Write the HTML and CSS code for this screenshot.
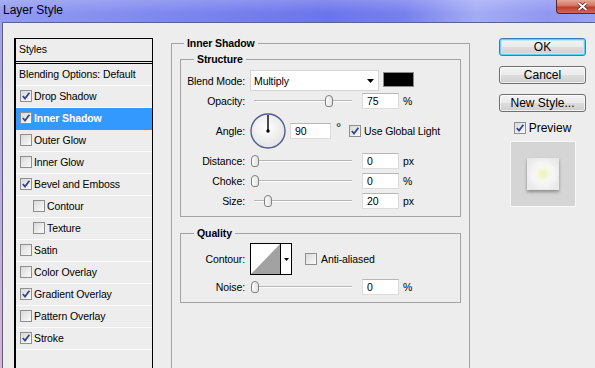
FILE: index.html
```html
<!DOCTYPE html>
<html>
<head>
<meta charset="utf-8">
<title>Layer Style</title>
<link rel="stylesheet" href="styles.css">
</head>
<body>
<div class="window">
	<div class="titlebar">
		<span class="title">Layer Style</span>
		<span class="close"><svg width="11" height="9" viewBox="0 0 11 9"><path d="M1.5 1 L9.5 8 M9.5 1 L1.5 8" stroke="#5a1a14" stroke-width="3.4"/><path d="M1.5 1 L9.5 8 M9.5 1 L1.5 8" stroke="#fff" stroke-width="2"/></svg></span>
	</div>
	<div class="client">
		<div class="styles">
			<div class="styles-head">Styles</div>
			<div class="srow plain">Blending Options: Default</div>
			<div class="srow"><span class="cb"><svg width="10" height="10" viewBox="0 0 10 10"><path d="M1.8 5 L4 7.6 L8.4 1.8" fill="none" stroke="#34468e" stroke-width="1.8"/></svg></span>Drop Shadow</div>
			<div class="srow sel"><span class="cb"><svg width="10" height="10" viewBox="0 0 10 10"><path d="M1.8 5 L4 7.6 L8.4 1.8" fill="none" stroke="#34468e" stroke-width="1.8"/></svg></span>Inner Shadow</div>
			<div class="srow"><span class="cb"></span>Outer Glow</div>
			<div class="srow"><span class="cb"></span>Inner Glow</div>
			<div class="srow"><span class="cb"><svg width="10" height="10" viewBox="0 0 10 10"><path d="M1.8 5 L4 7.6 L8.4 1.8" fill="none" stroke="#34468e" stroke-width="1.8"/></svg></span>Bevel and Emboss</div>
			<div class="srow sub"><span class="cb"></span>Contour</div>
			<div class="srow sub"><span class="cb"></span>Texture</div>
			<div class="srow"><span class="cb"></span>Satin</div>
			<div class="srow"><span class="cb"></span>Color Overlay</div>
			<div class="srow"><span class="cb"><svg width="10" height="10" viewBox="0 0 10 10"><path d="M1.8 5 L4 7.6 L8.4 1.8" fill="none" stroke="#34468e" stroke-width="1.8"/></svg></span>Gradient Overlay</div>
			<div class="srow"><span class="cb"></span>Pattern Overlay</div>
			<div class="srow"><span class="cb"><svg width="10" height="10" viewBox="0 0 10 10"><path d="M1.8 5 L4 7.6 L8.4 1.8" fill="none" stroke="#34468e" stroke-width="1.8"/></svg></span>Stroke</div>
		</div>

		<fieldset class="group outer">
			<legend>Inner Shadow</legend>
			<div class="outer-body">
				<fieldset class="group">
					<legend>Structure</legend>
					<div class="section-body structure">
						<div class="row row-blend">
							<span class="lbl">Blend Mode:</span>
							<div class="select">Multiply<svg width="7" height="4" viewBox="0 0 7 4"><path d="M0 0 H7 L3.5 4 Z" fill="#000"/></svg></div>
							<span class="color"></span>
						</div>
						<div class="row">
							<span class="lbl">Opacity:</span>
							<div class="slider"><div class="track"></div><span class="thumb" style="left: 75px"></span></div>
							<span class="num">75</span><span class="unit">%</span>
						</div>
						<div class="row row-angle">
							<span class="lbl">Angle:</span>
							<svg class="dial" width="36" height="36" viewBox="0 0 36 36">
								<defs>
									<radialGradient id="dialfill" cx="45%" cy="40%" r="60%">
										<stop offset="0" stop-color="#ffffff"/>
										<stop offset="1" stop-color="#e4e4e4"/>
									</radialGradient>
								</defs>
								<circle cx="18" cy="18" r="17" fill="url(#dialfill)" stroke="#4e5d8e" stroke-width="1.4"/>
								<path d="M18 18 V2" stroke="#000" stroke-width="1.4"/>
								<circle cx="18" cy="18" r="1.7" fill="#000"/>
							</svg>
							<span class="num wide">90</span>
							<span class="deg">&deg;</span>
							<span class="cb global"><svg width="10" height="10" viewBox="0 0 10 10"><path d="M1.8 5 L4 7.6 L8.4 1.8" fill="none" stroke="#34468e" stroke-width="1.8"/></svg></span>
							<span>Use Global Light</span>
						</div>
						<div class="row">
							<span class="lbl">Distance:</span>
							<div class="slider"><div class="track"></div><span class="thumb" style="left: 1px"></span></div>
							<span class="num">0</span><span class="unit">px</span>
						</div>
						<div class="row">
							<span class="lbl">Choke:</span>
							<div class="slider"><div class="track"></div><span class="thumb" style="left: 1px"></span></div>
							<span class="num">0</span><span class="unit">%</span>
						</div>
						<div class="row">
							<span class="lbl">Size:</span>
							<div class="slider"><div class="track"></div><span class="thumb" style="left: 14px"></span></div>
							<span class="num">20</span><span class="unit">px</span>
						</div>
					</div>
				</fieldset>

				<fieldset class="group quality">
					<legend>Quality</legend>
					<div class="section-body">
						<div class="row row-contour">
							<span class="lbl">Contour:</span>
							<div class="contour">
								<svg width="29" height="30" viewBox="0 0 29 30"><path d="M0 30 L29 0 V30 Z" fill="#a2a2a2"/></svg>
								<span class="contour-drop"><svg width="5" height="3" viewBox="0 0 5 3"><path d="M0 0 H5 L2.5 3 Z" fill="#000"/></svg></span>
							</div>
							<span class="cb aa"></span>
							<span>Anti-aliased</span>
						</div>
						<div class="row row-noise">
							<span class="lbl">Noise:</span>
							<div class="slider"><div class="track"></div><span class="thumb" style="left: 1px"></span></div>
							<span class="num">0</span><span class="unit">%</span>
						</div>
					</div>
				</fieldset>
			</div>
		</fieldset>

		<div class="side">
			<div class="btn default">OK</div>
			<div class="btn">Cancel</div>
			<div class="btn">New Style...</div>
			<div class="preview-row"><span class="cb"><svg width="10" height="10" viewBox="0 0 10 10"><path d="M1.8 5 L4 7.6 L8.4 1.8" fill="none" stroke="#34468e" stroke-width="1.8"/></svg></span>Preview</div>
			<div class="preview"><div class="preview-square"></div></div>
		</div>
	</div>
</div>
</body>
</html>
```

FILE: styles.css
```css
body {
	margin: 0;
	font-family: "Liberation Sans", Arial, sans-serif;
	font-size: 10.5px;
	letter-spacing: -0.1px;
	color: #000;
}

.window {
	width: 595px;
	height: 368px;
	overflow: hidden;
	display: flex;
	flex-direction: column;
	background: linear-gradient(#9aa1f0, #d8b2d6);
}

/* title bar */
.titlebar {
	height: 22px;
	flex: none;
	display: flex;
	justify-content: space-between;
	align-items: flex-start;
	background:
		linear-gradient(rgba(255,255,255,0.18), rgba(255,255,255,0) 60%),
		linear-gradient(90deg, #939cf1 0%, #8089ef 25%, #6c74eb 55%, #7880ee 68%, #a4acf5 80%, #8f97f1 92%, #9aa2f2 100%);
}
.title {
	font-size: 12px;
	letter-spacing: 0;
	line-height: 20px;
	padding-left: 3px;
}
.close {
	width: 39px;
	height: 14px;
	box-sizing: border-box;
	border: 1px solid #5e2420;
	border-top: none;
	border-right: none;
	border-radius: 0 0 0 4px;
	background: linear-gradient(#e8a898, #d27260 45%, #bb3e2e 55%, #cf6a55);
	display: flex;
	align-items: center;
	padding-left: 20px;
}

.client {
	flex: 1;
	margin-left: 2px;
	border-top: 1px solid #5d6191;
	border-left: 1px solid #5f5f72;
	background: #ededed;
	display: flex;
	align-items: flex-start;
	padding-left: 11px;
}

/* styles list */
.styles {
	width: 139px;
	height: 400px;
	flex: none;
	box-sizing: border-box;
	margin-top: 15px;
	border: 1px solid #000;
	border-left-width: 2px;
}
.styles-head {
	height: 22px;
	line-height: 20px;
	padding-left: 3px;
	border-bottom: 3px double #000;
}
.srow {
	height: 21px;
	box-sizing: border-box;
	display: flex;
	align-items: center;
	padding-left: 4px;
	padding-bottom: 2px;
	border-bottom: 1px solid #fbfbfb;
	height: 22px;
}
.srow .cb {
	margin-right: 2px;
}
.srow.plain {
	padding-left: 3px;
}
.srow.sub {
	padding-left: 17px;
}
.srow.sel {
	background: #3399ff;
	border-bottom-color: #3399ff;
	color: #fff;
	font-weight: bold;
}

/* checkbox */
.cb {
	width: 12px;
	height: 12px;
	flex: none;
	box-sizing: border-box;
	border: 1px solid #8e8f8f;
	background: linear-gradient(135deg, #d9d9d9, #fbfbfb);
	display: flex;
	align-items: center;
	justify-content: center;
}

/* group boxes */
.group {
	margin: 0;
	padding: 0;
	min-width: 0;
	border: 1px solid #a3a3a3;
}
.group > legend {
	padding: 0 3px;
	margin-left: 13px;
	font-weight: bold;
	line-height: 13px;
}
.outer {
	width: 299px;
	height: 380px;
	flex: none;
	box-sizing: border-box;
	margin-top: 14px;
	margin-left: 18px;
}
.outer > legend {
	margin-left: 12px;
}
.outer-body {
	padding: 3px 8px 0;
}
.section-body {
	padding: 4px 0 5px;
}
.quality {
	margin-top: 10px;
}
.quality .section-body {
	padding-top: 3px;
}

.row {
	height: 20px;
	display: flex;
	align-items: center;
}
.row-blend {
	height: 21px;
}
.row-angle {
	height: 40px;
}
.row-contour {
	height: 32px;
}
.row-noise {
	margin-top: 2px;
}
.lbl {
	width: 64px;
	flex: none;
	margin-right: 5px;
	text-align: right;
}

.select {
	width: 129px;
	height: 21px;
	box-sizing: border-box;
	border: 1px solid #d6d6d6;
	background: #fff;
	display: flex;
	align-items: center;
	justify-content: space-between;
	padding: 0 4px 0 3px;
}
.color {
	width: 31px;
	height: 15px;
	box-sizing: border-box;
	margin-left: 4px;
	align-self: flex-start;
	margin-top: 2px;
	border: 1px solid #8a8a8a;
	background: #000;
}

.slider {
	position: relative;
	width: 106px;
	height: 14px;
	flex: none;
	box-sizing: border-box;
	padding: 0 4px;
	display: flex;
	align-items: center;
}
.track {
	flex: 1;
	height: 0;
	border-top: 1px solid #b8b8b8;
	border-bottom: 1px solid #fcfcfc;
}
.thumb {
	position: absolute;
	top: 1px;
	width: 8px;
	height: 12px;
	box-sizing: border-box;
	border: 1px solid #7f7f7f;
	border-radius: 4px 4px 3px 3px;
	background: linear-gradient(90deg, #fdfdfd, #e2e2e2);
}

.num {
	width: 37px;
	height: 16px;
	flex: none;
	box-sizing: border-box;
	margin-left: 6px;
	padding-left: 4px;
	line-height: 14px;
	background: #fff;
	border: 1px solid #dcdcdc;
	border-top-color: #b7b7b7;
}
.num.wide {
	width: 41px;
	margin-left: 4px;
}
.unit {
	margin-left: 4px;
}
.deg {
	margin-left: 5px;
	margin-bottom: 8px;
	font-size: 13px;
	line-height: 13px;
}
.cb.global {
	margin-left: 8px;
	margin-right: 3px;
}

.contour {
	width: 42px;
	height: 32px;
	flex: none;
	box-sizing: border-box;
	border: 1px solid #000;
	background: #fff;
	display: flex;
}
.contour-drop {
	flex: 1;
	border-left: 1px solid #000;
	display: flex;
	align-items: center;
	justify-content: center;
}
.cb.aa {
	margin-left: 13px;
	margin-right: 4px;
}

/* right column */
.side {
	width: 87px;
	flex: none;
	margin-left: 29px;
	margin-top: 15px;
	display: flex;
	flex-direction: column;
	align-items: center;
	font-size: 12px;
	letter-spacing: 0;
}
.btn {
	width: 87px;
	height: 18px;
	box-sizing: border-box;
	margin-bottom: 10px;
	border: 1px solid #707070;
	border-radius: 3px;
	background: linear-gradient(#f3f3f3, #ebebeb 50%, #dddddd 50%, #cfcfcf);
	box-shadow: inset 0 0 0 1px rgba(255,255,255,0.7);
	text-align: center;
	line-height: 16px;
}
.btn.default {
	border-color: #3c7fb1;
	box-shadow: inset 0 0 0 1px #5cd0f6, inset 0 0 0 2px #bfeafa;
}
.preview-row {
	height: 12px;
	display: flex;
	align-items: center;
}
.preview-row .cb {
	margin-right: 3px;
}
.preview {
	width: 66px;
	height: 66px;
	box-sizing: border-box;
	margin-top: 7px;
	border: 1px solid #f8f8f8;
	background: #d5d5d5;
	display: flex;
	align-items: center;
	justify-content: center;
}
.preview-square {
	width: 32px;
	height: 32px;
	background: radial-gradient(circle, #eef5b8 0, #f1f6d2 4px, #f6f7ee 7px, #f5f5f5 11px, #e9e9e9 18px);
	box-shadow: 0 2px 3px rgba(0,0,0,0.35);
}
```
